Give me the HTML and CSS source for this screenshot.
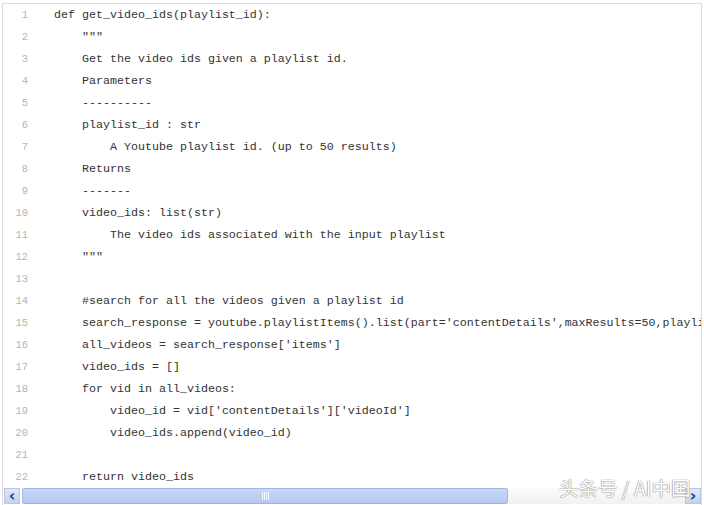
FILE: index.html
```html
<!DOCTYPE html>
<html>
<head>
<meta charset="utf-8">
<link rel="stylesheet" href="styles.css">
</head>
<body>
<div class="frame">
  <div class="code">
    <div class="row"><span class="ln">1</span><span class="src">def get_video_ids(playlist_id):</span></div>
    <div class="row"><span class="ln">2</span><span class="src">    """</span></div>
    <div class="row"><span class="ln">3</span><span class="src">    Get the video ids given a playlist id.</span></div>
    <div class="row"><span class="ln">4</span><span class="src">    Parameters</span></div>
    <div class="row"><span class="ln">5</span><span class="src">    ----------</span></div>
    <div class="row"><span class="ln">6</span><span class="src">    playlist_id : str</span></div>
    <div class="row"><span class="ln">7</span><span class="src">        A Youtube playlist id. (up to 50 results)</span></div>
    <div class="row"><span class="ln">8</span><span class="src">    Returns</span></div>
    <div class="row"><span class="ln">9</span><span class="src">    -------</span></div>
    <div class="row"><span class="ln">10</span><span class="src">    video_ids: list(str)</span></div>
    <div class="row"><span class="ln">11</span><span class="src">        The video ids associated with the input playlist</span></div>
    <div class="row"><span class="ln">12</span><span class="src">    """</span></div>
    <div class="row"><span class="ln">13</span><span class="src"></span></div>
    <div class="row"><span class="ln">14</span><span class="src">    #search for all the videos given a playlist id</span></div>
    <div class="row"><span class="ln">15</span><span class="src">    search_response = youtube.playlistItems().list(part='contentDetails',maxResults=50,playlistId=playlist_id).execute()</span></div>
    <div class="row"><span class="ln">16</span><span class="src">    all_videos = search_response['items']</span></div>
    <div class="row"><span class="ln">17</span><span class="src">    video_ids = []</span></div>
    <div class="row"><span class="ln">18</span><span class="src">    for vid in all_videos:</span></div>
    <div class="row"><span class="ln">19</span><span class="src">        video_id = vid['contentDetails']['videoId']</span></div>
    <div class="row"><span class="ln">20</span><span class="src">        video_ids.append(video_id)</span></div>
    <div class="row"><span class="ln">21</span><span class="src"></span></div>
    <div class="row"><span class="ln">22</span><span class="src">    return video_ids</span></div>
  </div>
  <div class="hscroll">
    <div class="btn left">&lsaquo;</div>
    <div class="thumb"><span class="grip"></span></div>
    <div class="track"></div>
    <div class="btn right">&rsaquo;</div>
  </div>
</div>
<div class="mark">头条号 / AI中国</div>
</body>
</html>
```
FILE: styles.css
```css
html, body {
  margin: 0;
  padding: 0;
  background: #fff;
}
body {
  width: 704px;
  height: 505px;
  overflow: hidden;
  position: relative;
}
.frame {
  margin: 3px 2px 0 2px;
  border: 1px solid #dcdcdc;
  border-bottom: none;
  height: 502px;
  display: flex;
  flex-direction: column;
  box-sizing: border-box;
}
.code {
  flex: 0 0 484px;
  overflow: hidden;
}
.row {
  display: flex;
  height: 22px;
  line-height: 22px;
  white-space: pre;
}
.ln {
  flex: 0 0 25px;
  text-align: right;
  font-family: "Liberation Mono", "DejaVu Sans Mono", monospace;
  font-size: 10.5px;
  color: #b4b4b4;
}
.src {
  margin-left: 26px;
  font-family: "Liberation Mono", "DejaVu Sans Mono", monospace;
  font-size: 11.67px;
  color: #333;
}
.hscroll {
  display: flex;
  flex: 0 0 16px;
  margin: 0 0 0 1px;
  align-items: stretch;
}
.btn {
  flex: 0 0 14px;
  background: linear-gradient(#dfe8f7, #c3d3ee);
  border: 1px solid #b5c6e6;
  color: #1e3d8a;
  font-family: "DejaVu Sans", sans-serif;
  font-weight: bold;
  font-size: 16px;
  line-height: 13px;
  text-align: center;
}
.thumb {
  flex: 0 0 484px;
  margin-left: 2px;
  background: linear-gradient(#c9d9f6, #b4c9f1);
  border: 1px solid #9fb5e3;
  border-radius: 2px;
  display: flex;
  align-items: center;
  justify-content: center;
}
.grip {
  width: 7px;
  height: 8px;
  background: repeating-linear-gradient(90deg, #f4f7fd 0 1px, transparent 1px 2px);
}
.track {
  flex: 1;
  background: linear-gradient(#fbfbfb, #f1f1ee);
}
.mark {
  position: absolute;
  left: 559px;
  top: 475px;
  font-family: "Noto Sans CJK SC", sans-serif;
  font-size: 19.5px;
  line-height: 26px;
  color: #fff;
  text-shadow: 0 0 1px #777, 0 0 1px #777;
}
```
